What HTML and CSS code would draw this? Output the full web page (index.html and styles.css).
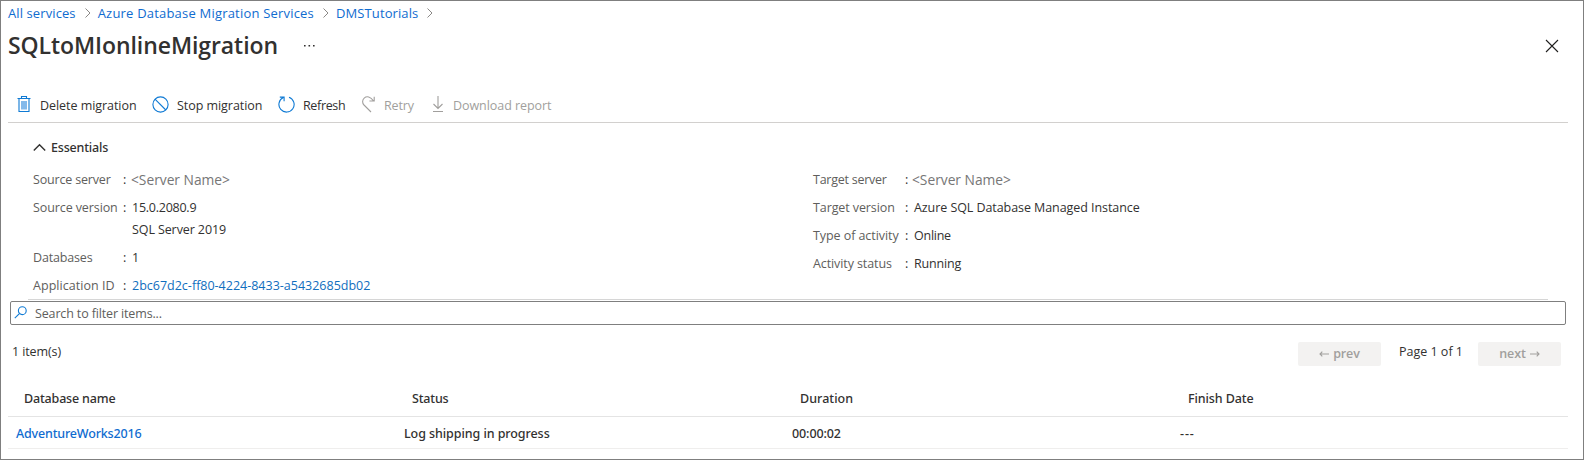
FILE: index.html
```html
<!DOCTYPE html>
<html lang="en">
<head>
<meta charset="utf-8">
<title>SQLtoMIonlineMigration</title>
<link rel="stylesheet" href="styles.css">
</head>
<body>
<div class="blade">
  <nav class="crumbs">
    <a class="ls-c">All services</a>
    <svg class="sep" width="8" height="12" viewBox="0 0 8 12"><path d="M1.5 1.5 6 6 1.5 10.5"/></svg>
    <a class="ls-b">Azure Database Migration Services</a>
    <svg class="sep" width="8" height="12" viewBox="0 0 8 12"><path d="M1.5 1.5 6 6 1.5 10.5"/></svg>
    <a class="ls-c">DMSTutorials</a>
    <svg class="sep" width="8" height="12" viewBox="0 0 8 12"><path d="M1.5 1.5 6 6 1.5 10.5"/></svg>
  </nav>

  <header class="titlebar">
    <h1>SQLtoMIonlineMigration</h1>
    <svg class="more" width="14" height="4" viewBox="0 0 14 4"><path d="M1 1h1.600v1.600H1zM5.500 1h1.600v1.600H5.500zM10 1h1.600v1.600H10z"/></svg>
    <svg class="close" width="14" height="14" viewBox="0 0 14 14"><path d="M1 1l12 12M13 1 1 13"/></svg>
  </header>

  <div class="toolbar">
    <div class="cmd cmd-delete">
      <svg width="14" height="17" viewBox="0 0 14 17"><path d="M.5 2.500h13M4.500 2.500v-2h5v2M2 3v12.500h10V3" class="blue"/><path d="M4 5h6v8.500H4z" class="bin"/></svg>
      <span>Delete migration</span>
    </div>
    <div class="cmd cmd-stop">
      <svg width="17" height="17" viewBox="0 0 17 17"><circle cx="8.500" cy="8.500" r="7.600" class="blue"/><path d="M3 3.200 13.800 14" class="blue"/></svg>
      <span>Stop migration</span>
    </div>
    <div class="cmd cmd-refresh">
      <svg width="17" height="17" viewBox="0 0 17 17"><path d="M11 1.300a7.600 7.600 0 1 1-5.700.3M1.800 1.100h4.300v4.200" class="blue"/></svg>
      <span>Refresh</span>
    </div>
    <div class="cmd cmd-retry off">
      <svg width="14" height="17" viewBox="0 0 14 17"><path d="M9 16 2 9C.1 7 .2 3.900 2.200 2.100 4.700-.2 8.600.4 11.400 4.800M12.200.8v4.200H7.400"/></svg>
      <span>Retry</span>
    </div>
    <div class="cmd cmd-download off">
      <svg width="12" height="17" viewBox="0 0 12 17"><path d="M6 0v12.500M1.500 8 6 12.500 10.500 8M1 15.500h10"/></svg>
      <span>Download report</span>
    </div>
  </div>

  <section class="essentials">
    <div class="ess-head">
      <svg width="13" height="9" viewBox="0 0 13 9"><path d="M.8 7.600 6.500 1.700l5.700 5.900"/></svg>
      <span>Essentials</span>
    </div>
    <div class="ess-cols">
      <dl class="props source">
        <dt class="ls-d">Source server</dt><dd class="masked">&lt;Server Name&gt;</dd>
        <dt class="ls-e">Source version</dt><dd><span class="ls-f">15.0.2080.9</span><br><span class="ls-e">SQL Server 2019</span></dd>
        <dt class="ls-d">Databases</dt><dd>1</dd>
        <dt class="ls-a">Application ID</dt><dd><a>2bc67d2c-ff80-4224-8433-a5432685db02</a></dd>
      </dl>
      <dl class="props target">
        <dt class="ls-f">Target server</dt><dd class="masked">&lt;Server Name&gt;</dd>
        <dt class="ls-e">Target version</dt><dd class="ls-g">Azure SQL Database Managed Instance</dd>
        <dt class="ls-g">Type of activity</dt><dd class="ls-f">Online</dd>
        <dt class="ls-e">Activity status</dt><dd class="ls-d">Running</dd>
      </dl>
    </div>
  </section>

  <div class="search">
    <svg width="13" height="13" viewBox="0 0 13 13"><circle cx="8.300" cy="4.700" r="3.900" class="blue"/><path d="M5.400 7.600.8 12.200" class="blue"/></svg>
    <span>Search to filter items...</span>
  </div>

  <div class="pager">
    <span class="count">1 item(s)</span>
    <div class="btn"><svg width="10" height="6" viewBox="0 0 10 6"><path d="M10 3H1M3.300.700 1 3l2.300 2.300"/></svg><span>prev</span></div>
    <span class="pages">Page 1 of 1</span>
    <div class="btn"><span>next</span><svg width="10" height="6" viewBox="0 0 10 6"><path d="M0 3h9M6.700.700 9 3 6.700 5.300"/></svg></div>
  </div>

  <div class="grid">
    <div class="row head">
      <div class="ls-d">Database name</div><div class="ls-d">Status</div><div class="ls-a">Duration</div><div class="ls-e">Finish Date</div>
    </div>
    <div class="row">
      <div><a class="ls-d">AdventureWorks2016</a></div><div class="ls-g">Log shipping in progress</div><div class="ls-e">00:00:02</div><div class="dashes">---</div>
    </div>
  </div>
</div>
</body>
</html>
```
FILE: styles.css
```css
* { box-sizing: border-box; }
body {
  margin: 0;
  font-family: "Open Sans", "Noto Sans", sans-serif;
  font-size: 12.5px;
  color: #323130;
  background: #fff;
}
svg { display: block; flex: none; fill: none; stroke: #323130; stroke-width: 1.1; }
.blue { stroke: #0f7ad4; }
a { color: #106ebe; }

.ls-a { letter-spacing: .04px; }
.ls-b { letter-spacing: .2px; }
.ls-c { letter-spacing: .1px; }
.ls-d { letter-spacing: -.17px; }
.ls-e { letter-spacing: -.1px; }
.ls-f { letter-spacing: -.25px; }
.ls-g { letter-spacing: -.07px; }

.blade {
  width: 1584px;
  height: 460px;
  border: 1px solid #7f7f7f;
  white-space: nowrap;
  overflow: hidden;
}

.crumbs {
  display: flex;
  align-items: center;
  height: 24px;
  padding-left: 7px;
  font-size: 13px;
}
.crumbs a { color: #0f6cd0; }
.sep { margin: 0 6px 0 8px; stroke: #8a8886; stroke-width: 1; }

.titlebar {
  display: flex;
  align-items: center;
  height: 40px;
  padding: 0 24px 0 7px;
}
h1 { margin: 0; width: 295px; font-size: 23px; font-weight: 600; line-height: 40px; letter-spacing: -.08px; }
.more { margin-top: 2px; fill: #323130; stroke: none; }
.close { margin-left: auto; margin-top: 2px; stroke: #201f1e; }

.toolbar {
  display: flex;
  align-items: center;
  height: 35px;
  margin: 23px 15px 0 7px;
  padding-left: 9px;
  border-bottom: 1px solid #d2d0ce;
}
.cmd { display: flex; align-items: center; }
.cmd svg { margin-top: -1px; }
.cmd-delete { width: 135px; gap: 9px; letter-spacing: -.05px; }
.cmd-stop { width: 126px; gap: 8px; letter-spacing: -.05px; }
.cmd-refresh { width: 84px; gap: 8px; letter-spacing: -.35px; }
.cmd-retry { width: 70px; gap: 8px; letter-spacing: -.15px; }
.cmd-download { gap: 9px; letter-spacing: -.06px; }
.bin { fill: #83b9ea; stroke: none; }
.off { color: #a19f9d; }
.off svg { stroke: #a19f9d; }

.essentials { margin: 6px 35px 0 27px; height: 171px; border-bottom: 1px solid #d6d6d6; }
.ess-head { display: flex; align-items: center; gap: 5px; height: 37px; padding-left: 5px; font-family: "Noto Sans", sans-serif; font-weight: 500; letter-spacing: -.18px; }
.ess-head svg { stroke-width: 1.4; }
.ess-cols { display: grid; grid-template-columns: 780px 1fr; padding-left: 5px; }
.props { display: grid; margin: 0; align-content: start; line-height: 22px; }
.source { grid-template-columns: 90px 1fr; }
.target { grid-template-columns: 92px 1fr; }
dt, dd { margin: 0; padding: 3px 0; }
dt { color: #605e5c; }
dd { padding-left: 9px; position: relative; }
dd::before { content: ":"; position: absolute; left: 0; color: #323130; }
.masked { color: #767676; font-size: 13.8px; letter-spacing: -.02px; padding-left: 8px; }
.target .masked { padding-left: 7px; }
.masked::before { font-size: 12.5px; }

.search {
  display: flex;
  align-items: center;
  gap: 8px;
  height: 24px;
  margin: 1px 17px 0 9px;
  padding-left: 3px;
  border: 1px solid #7f7f7f;
  border-radius: 2px;
  color: #605e5c;
  letter-spacing: -.14px;
}
.search svg { margin-top: -2px; }

.pager { display: flex; align-items: center; height: 24px; margin: 17px 22px 0 11px; }
.count, .pages { margin-top: -6px; }
.count { margin-right: auto; letter-spacing: -.1px; }
.pages { margin-left: 18px; margin-right: 15px; }
.btn {
  display: flex;
  align-items: center;
  justify-content: center;
  gap: 4px;
  width: 83px;
  height: 24px;
  background: #f3f2f1;
  border-radius: 2px;
  color: #a19f9d;
  font-weight: 600;
  line-height: 22px;
  letter-spacing: -.15px;
}
.btn span { margin-top: -1px; }
.btn svg { stroke: #a19f9d; }

.grid { margin: 14px 15px 0 7px; font-family: "Noto Sans", sans-serif; font-weight: 500; }
.row { display: grid; grid-template-columns: repeat(4, 388px); height: 32px; line-height: 33px; padding-left: 8px; border-bottom: 1px solid #efeeed; overflow: hidden; }
.head { height: 37px; line-height: 38px; padding-left: 16px; border-color: #e4e4e4; }
.row a { color: #0f6cd0; }
.dashes { letter-spacing: .9px; }
```
